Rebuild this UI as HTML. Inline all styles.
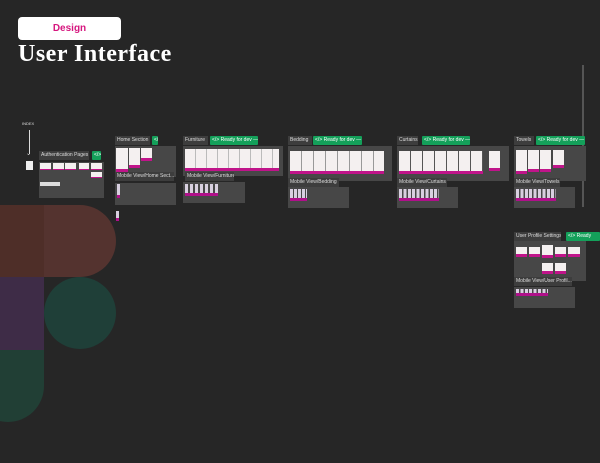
<!DOCTYPE html>
<html><head><style>
*{margin:0;padding:0;box-sizing:border-box}
body{width:600px;height:463px;background:#262626;position:relative;overflow:hidden;font-family:"Liberation Sans",sans-serif}
.a{position:absolute}
.lb{position:absolute;background:#3d3d3d;color:#ddd;font-size:5px;line-height:9px;padding:0 2px;white-space:nowrap;overflow:hidden}
.gr{position:absolute;background:#14a05a;color:#fff;font-size:5px;line-height:9px;padding:0 2px;border-radius:1px;white-space:nowrap;overflow:hidden}
.fr{position:absolute;background:#474747}
.t{position:absolute;background:#f4f0f0;border-bottom:3px solid #c0148a}
.m{position:absolute;background:#d8d0e0;border-bottom:3px solid #b0108a;width:3px}
</style></head><body>
<div class="a" style="left:18px;top:17px;width:103px;height:23px;background:#fff;border-radius:4px;color:#d6167e;font-size:10px;font-weight:bold;text-align:center;line-height:23px">Design</div>
<div class="a" style="left:18px;top:40px;color:#fff;font-family:'Liberation Serif',serif;font-weight:bold;font-size:24px;letter-spacing:0.5px;line-height:28px">User Interface</div>
<div class="a" style="left:582px;top:65px;width:2px;height:142px;background:#555"></div>

<div class="a" style="left:22px;top:121px;color:#ddd;font-size:4px">INDEX</div>
<div class="a" style="left:29px;top:130px;width:1px;height:24px;background:#ddd"></div>
<div class="a" style="left:26px;top:152px;color:#ddd;font-size:6px;line-height:4px">⌄</div>
<div class="a" style="left:26px;top:161px;width:7px;height:9px;background:#eee"></div>

<!-- Figma logo -->
<div class="a" style="left:-60px;top:205px;width:104px;height:72px;background:#4e2e28;border-radius:36px 0 0 36px"></div>
<div class="a" style="left:44px;top:205px;width:72px;height:72px;background:#54332f;border-radius:0 36px 36px 0"></div>
<div class="a" style="left:-30px;top:277px;width:74px;height:73px;background:#3e2c47"></div>
<div class="a" style="left:44px;top:277px;width:72px;height:72px;background:#1f3f38;border-radius:50%"></div>
<div class="a" style="left:-28px;top:350px;width:72px;height:72px;background:#213f35;border-radius:0 0 36px 36px"></div>

<!-- Auth -->
<div class="lb" style="left:39px;top:151px;width:50px">Authentication Pages</div>
<div class="gr" style="left:92px;top:151px;width:9px">&lt;/&gt;</div>
<div class="fr" style="left:39px;top:162px;width:65px;height:36px"></div>
<div class="t" style="left:40px;top:163px;width:11px;height:7px;border-bottom-width:1px"></div>
<div class="t" style="left:53px;top:163px;width:11px;height:7px;border-bottom-width:1px"></div>
<div class="t" style="left:65px;top:163px;width:11px;height:7px;border-bottom-width:1px"></div>
<div class="t" style="left:79px;top:163px;width:10px;height:7px;border-bottom-width:1px"></div>
<div class="t" style="left:91px;top:163px;width:11px;height:7px;border-bottom-width:1px"></div>
<div class="t" style="left:91px;top:172px;width:11px;height:6px;border-bottom-width:1px"></div>
<div class="a" style="left:40px;top:182px;width:20px;height:4px;background:#ddd"></div>

<!-- Home -->
<div class="lb" style="left:115px;top:136px;width:35px">Home Section</div>
<div class="gr" style="left:152px;top:136px;width:6px">&lt;/&gt;</div>
<div class="fr" style="left:115px;top:146px;width:61px;height:31px"></div>
<div class="t" style="left:116px;top:148px;width:12px;height:24px"></div>
<div class="t" style="left:129px;top:148px;width:11px;height:20px"></div>
<div class="t" style="left:141px;top:148px;width:11px;height:13px"></div>
<div class="lb" style="left:115px;top:172px;width:59px">Mobile View/Home Sect...</div>
<div class="fr" style="left:115px;top:183px;width:61px;height:22px"></div>
<div class="m" style="left:117px;top:184px;height:14px"></div>
<div class="m" style="left:116px;top:211px;height:10px"></div>

<!-- Furniture -->
<div class="lb" style="left:183px;top:136px;width:25px">Furniture</div>
<div class="gr" style="left:210px;top:136px;width:48px">&lt;/&gt; Ready for dev —</div>
<div class="fr" style="left:183px;top:146px;width:100px;height:30px"></div>
<div class="t" style="left:185px;top:149px;width:94px;height:22px;background:repeating-linear-gradient(90deg,#f4f0f0 0 10px,#bbb 10px 11px)"></div>
<div class="lb" style="left:185px;top:172px;width:49px">Mobile View/Furniture</div>
<div class="fr" style="left:183px;top:182px;width:62px;height:21px"></div>
<div class="a" style="left:185px;top:184px;width:33px;height:12px;background:repeating-linear-gradient(90deg,#d8d0e0 0 3px,transparent 3px 5px);border-bottom:3px solid #b0108a"></div>

<!-- Bedding -->
<div class="lb" style="left:288px;top:136px;width:24px">Bedding</div>
<div class="gr" style="left:313px;top:136px;width:49px">&lt;/&gt; Ready for dev —</div>
<div class="fr" style="left:288px;top:146px;width:104px;height:35px"></div>
<div class="t" style="left:290px;top:151px;width:94px;height:23px;background:repeating-linear-gradient(90deg,#f4f0f0 0 11px,#999 11px 12px)"></div>
<div class="lb" style="left:288px;top:178px;width:51px">Mobile View/Bedding</div>
<div class="fr" style="left:288px;top:187px;width:61px;height:21px"></div>
<div class="a" style="left:290px;top:189px;width:17px;height:12px;background:repeating-linear-gradient(90deg,#d8d0e0 0 3px,transparent 3px 4px);border-bottom:3px solid #b0108a"></div>

<!-- Curtains -->
<div class="lb" style="left:397px;top:136px;width:21px">Curtains</div>
<div class="gr" style="left:422px;top:136px;width:48px">&lt;/&gt; Ready for dev —</div>
<div class="fr" style="left:397px;top:146px;width:112px;height:35px"></div>
<div class="t" style="left:399px;top:151px;width:84px;height:23px;background:repeating-linear-gradient(90deg,#f4f0f0 0 11px,#555 11px 12px)"></div>
<div class="t" style="left:489px;top:151px;width:11px;height:20px"></div>
<div class="lb" style="left:397px;top:178px;width:50px">Mobile View/Curtains</div>
<div class="fr" style="left:397px;top:187px;width:61px;height:21px"></div>
<div class="a" style="left:399px;top:189px;width:40px;height:12px;background:repeating-linear-gradient(90deg,#d8d0e0 0 3px,transparent 3px 4.4px);border-bottom:3px solid #b0108a"></div>

<!-- Towels -->
<div class="lb" style="left:514px;top:136px;width:20px">Towels</div>
<div class="gr" style="left:536px;top:136px;width:49px">&lt;/&gt; Ready for dev —</div>
<div class="fr" style="left:514px;top:146px;width:72px;height:35px"></div>
<div class="t" style="left:516px;top:150px;width:11px;height:24px"></div>
<div class="t" style="left:528px;top:150px;width:11px;height:22px"></div>
<div class="t" style="left:540px;top:150px;width:11px;height:22px"></div>
<div class="t" style="left:553px;top:150px;width:11px;height:18px"></div>
<div class="lb" style="left:514px;top:178px;width:46px">Mobile View/Towels</div>
<div class="fr" style="left:514px;top:187px;width:61px;height:21px"></div>
<div class="a" style="left:516px;top:189px;width:40px;height:12px;background:repeating-linear-gradient(90deg,#d8d0e0 0 3px,transparent 3px 4.4px);border-bottom:3px solid #b0108a"></div>

<!-- User profile -->
<div class="lb" style="left:514px;top:232px;width:47px">User Profile Settings</div>
<div class="gr" style="left:566px;top:232px;width:34px">&lt;/&gt; Ready</div>
<div class="fr" style="left:514px;top:241px;width:72px;height:40px"></div>
<div class="t" style="left:516px;top:247px;width:11px;height:10px"></div>
<div class="t" style="left:529px;top:247px;width:11px;height:10px"></div>
<div class="t" style="left:542px;top:245px;width:11px;height:13px"></div>
<div class="t" style="left:555px;top:247px;width:11px;height:10px"></div>
<div class="t" style="left:568px;top:247px;width:12px;height:10px"></div>
<div class="t" style="left:542px;top:263px;width:11px;height:11px"></div>
<div class="t" style="left:555px;top:263px;width:11px;height:11px"></div>
<div class="lb" style="left:514px;top:277px;width:58px">Mobile View/User Profil...</div>
<div class="fr" style="left:514px;top:287px;width:61px;height:21px"></div>
<div class="a" style="left:516px;top:289px;width:32px;height:7px;background:repeating-linear-gradient(90deg,#d8d0e0 0 3px,transparent 3px 4.4px);border-bottom:3px solid #b0108a"></div>
</body></html>
